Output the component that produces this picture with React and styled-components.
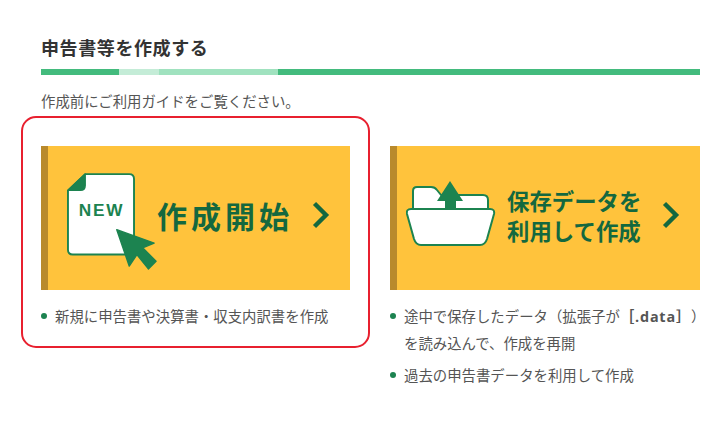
import styled, { createGlobalStyle } from "styled-components"

const GlobalStyle = createGlobalStyle`
    html, body {
        margin: 0;
        padding: 0;
        background: #fff;
    }
    body {
        font-family: "Noto Sans CJK JP", "Liberation Sans", sans-serif;
        color: #333;
    }
`

const NewFileIcon = () => (
    <svg width="94" height="104" viewBox="0 0 94 104">
        <path d="M19 2 H65 Q70 2 70 7 V81 Q70 86 65 86 H6 Q1 86 1 81 V19 Z" fill="#fff" stroke="#1c8350" strokeWidth="2" strokeLinejoin="round" />
        <path d="M19 2 V14 Q19 19 14 19 H1 Z" fill="#1c8350" stroke="#1c8350" strokeWidth="1.5" strokeLinejoin="round" />
        <text x="36" y="46" textAnchor="middle" fontFamily="Liberation Sans, sans-serif" fontWeight="700" fontSize="18" letterSpacing="1.8" fill="#1c8350">NEW</text>
        <path d="M52 60 L91 74 L79 79 L93 93 L85 101 L73 86 L65 98 Z" fill="#1c8350" stroke="#1c8350" strokeWidth="1.5" strokeLinejoin="round" />
    </svg>
)

const FolderIcon = () => (
    <svg width="90" height="67" viewBox="0 0 90 67">
        <path d="M7 30 V11 Q7 7 11 7 H25 Q29 7 31 10 L35 15 H77 Q82 15 82 20 V30 Z" fill="#fff" stroke="#1c8350" strokeWidth="2" strokeLinejoin="round" />
        <path d="M5 29 H84 Q89 29 88 34 L81 59 Q79 65 74 65 H15 Q10 65 8 59 L1 34 Q0 29 5 29 Z" fill="#fff" stroke="#1c8350" strokeWidth="2" strokeLinejoin="round" />
        <path d="M44 1 L57 21 H50 V29 H39 V21 H31 Z" fill="#1c8350" />
    </svg>
)

const Chevron = () => (
    <svg width="18" height="28" viewBox="0 0 18 28">
        <path d="M2.5 2.5 L14 14 L2.5 25.5" fill="none" stroke="#14683f" strokeWidth="4.4" />
    </svg>
)

const App = () => (
    <>
        <GlobalStyle />
        <Page>
            <Title>申告書等を作成する</Title>
            <ProgressBar>
                <BarPart $width={78} $color="#43bb7d" />
                <BarPart $width={40} $color="#c4ecd7" />
                <BarPart $width={119} $color="#a0e2bf" />
                <BarPart $grow $color="#43bb7d" />
            </ProgressBar>
            <Lead>作成前にご利用ガイドをご覧ください。</Lead>
            <Columns>
                <Column $width="309px">
                    <Highlight />
                    <ActionCard>
                        <NewIconSlot><NewFileIcon /></NewIconSlot>
                        <BigLabel>作成開始</BigLabel>
                        <Chevron />
                    </ActionCard>
                    <Notes>
                        <Note>新規に申告書や決算書・収支内訳書を作成</Note>
                    </Notes>
                </Column>
                <Column $width="310px">
                    <ActionCard>
                        <FolderSlot><FolderIcon /></FolderSlot>
                        <SmallLabel>保存データを<br />利用して作成</SmallLabel>
                        <Chevron />
                    </ActionCard>
                    <Notes>
                        <Note>途中で保存したデータ（拡張子が<Ext>［.data］</Ext>）<br />を読み込んで、作成を再開</Note>
                        <Note>過去の申告書データを利用して作成</Note>
                    </Notes>
                </Column>
            </Columns>
        </Page>
    </>
)

export default App

const Page = styled.div`
    width: 720px;
    height: 421px;
    box-sizing: border-box;
    padding: 35px 20px 0 41px;
    overflow: hidden;
`

const Title = styled.h2`
    margin: 0;
    font-size: 18px;
    line-height: 24px;
    font-weight: 700;
    letter-spacing: 0.6px;
    color: #333;
`

const ProgressBar = styled.div`
    display: flex;
    height: 6px;
    margin-top: 10px;
`

const BarPart = styled.div`
    background-color: ${(p) => p.$color};
    width: ${(p) => (p.$width ? `${p.$width}px` : "auto")};
    flex: ${(p) => (p.$grow ? 1 : "none")};
`

const Lead = styled.p`
    margin: 16px 0 0;
    font-size: 14.4px;
    line-height: 20px;
    color: #555;
`

const Columns = styled.div`
    display: flex;
    gap: 40px;
    margin-top: 35px;
`

const Column = styled.div`
    position: relative;
    flex: none;
    width: ${(p) => p.$width};
`

const Highlight = styled.div`
    position: absolute;
    top: -30px;
    left: -20px;
    right: -20px;
    height: 232px;
    box-sizing: border-box;
    border: 2px solid #e8202f;
    border-radius: 15px;
    pointer-events: none;
`

const ActionCard = styled.div`
    display: flex;
    align-items: center;
    height: 144px;
    box-sizing: border-box;
    padding: 0 20px 6px 0;
    background-color: #ffc33c;
    border-left: 7px solid #b98a2c;
`

const NewIconSlot = styled.div`
    display: flex;
    margin: 13px 0 0 19px;
    width: 90px;
`

const FolderSlot = styled.div`
    display: flex;
    margin: 0 0 3px 9px;
    width: 101px;
`

const BigLabel = styled.span`
    flex: 1;
    font-size: 30px;
    font-weight: 700;
    letter-spacing: 4px;
    color: #14683f;
    white-space: nowrap;
`

const SmallLabel = styled.span`
    flex: 1;
    font-size: 22.4px;
    line-height: 30px;
    font-weight: 700;
    color: #14683f;
    white-space: nowrap;
`

const Notes = styled.ul`
    list-style: none;
    margin: 13px 0 0;
    padding: 0;
`

const Note = styled.li`
    position: relative;
    padding-left: 14px;
    margin-bottom: 6px;
    font-size: 14.4px;
    line-height: 26px;
    color: #555;
    white-space: nowrap;
    text-spacing-trim: space-all;

    &::before {
        content: "";
        position: absolute;
        left: 0;
        top: 10px;
        width: 6px;
        height: 6px;
        border-radius: 50%;
        background-color: #1c8350;
    }
`

const Ext = styled.span`
    font-weight: 700;
    font-family: "Open Sans", "Noto Sans CJK JP", sans-serif;
    letter-spacing: 0.8px;
`
